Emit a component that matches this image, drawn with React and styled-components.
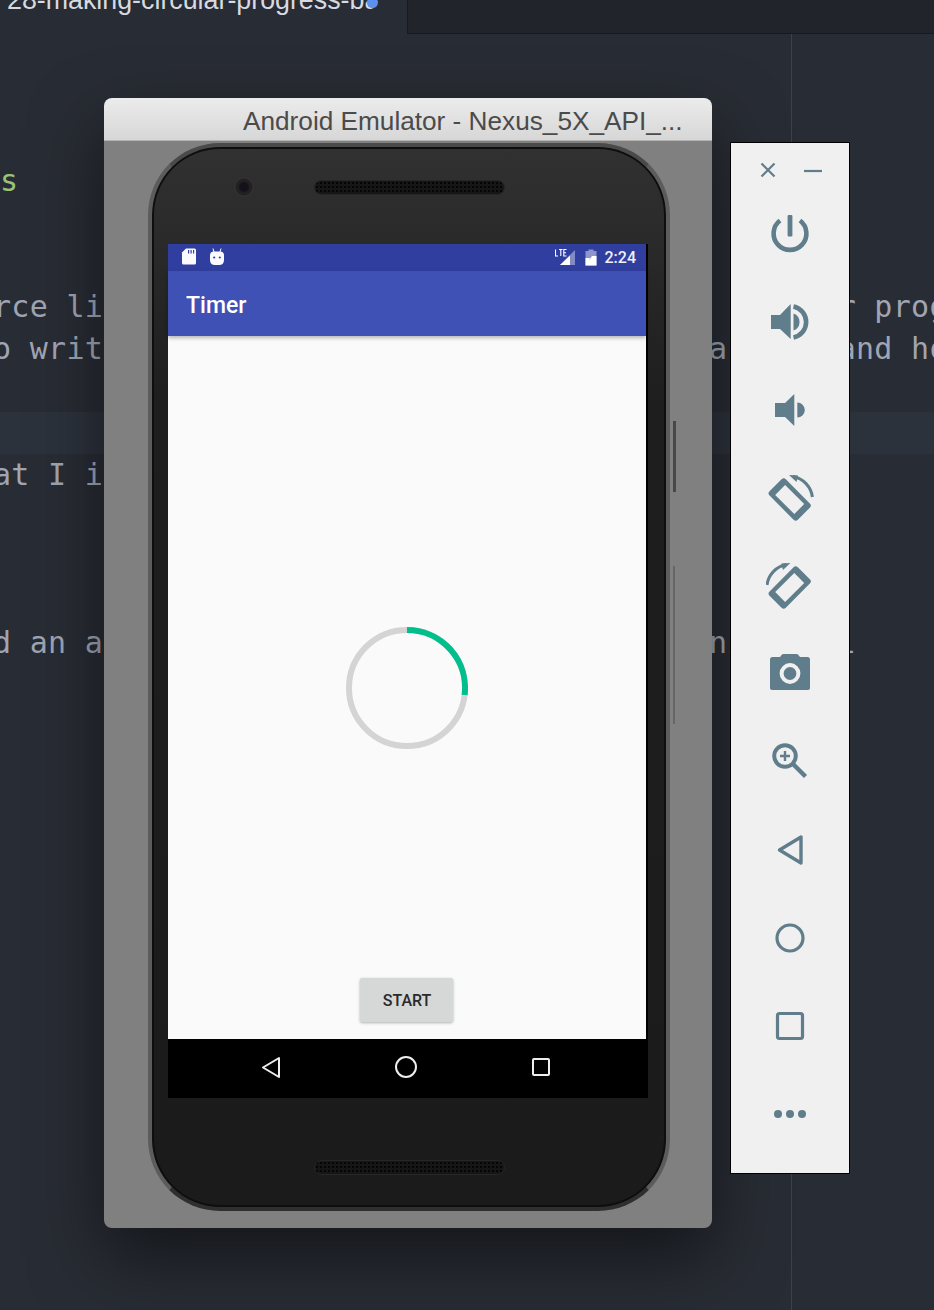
import styled, { createGlobalStyle } from 'styled-components';

const GlobalStyle = createGlobalStyle`
  html, body {
    margin: 0;
    padding: 0;
    background: #282c34;
  }
`;

const Desktop = styled.div`
  position: relative;
  width: 934px;
  height: 1310px;
  overflow: hidden;
  background: #282c34;
`;

const TabBar = styled.div`
  display: flex;
  height: 34px;
`;

const ActiveTab = styled.div`
  position: relative;
  width: 407px;
  overflow: hidden;
  padding-left: 7px;
  box-sizing: border-box;
  font: 26.8px/26px 'Liberation Sans', sans-serif;
  color: #d7dae0;
  white-space: nowrap;
`;

const TabTitle = styled.div`
  margin-top: -13px;
`;

const ModifiedDot = styled.span`
  position: absolute;
  left: 367px;
  top: -3px;
  width: 11px;
  height: 11px;
  border-radius: 50%;
  background: #5b8ff0;
  box-shadow: 8px 0 0 3px #282c34;
`;

const IdleTab = styled.div`
  flex: 1;
  background: #21252b;
  border-left: 1px solid #181a1f;
  border-bottom: 1px solid #181a1f;
`;

const Editor = styled.div`
  font: 30px/42px 'DejaVu Sans Mono', monospace;
  letter-spacing: 0.3px;
  color: #a0a5b3;
  white-space: pre;
`;

const Line = styled.div`
  height: 42px;
  text-indent: ${({ $indent }) => $indent || 0}px;
  color: ${({ $accent }) => ($accent ? '#98c379' : '#a0a5b3')};
  background: ${({ $active }) => ($active ? '#2c323c' : 'transparent')};
`;

const WrapGuide = styled.div`
  position: absolute;
  left: 791px;
  top: 34px;
  bottom: 0;
  width: 1px;
  background: #3b404b;
`;

const EmulatorWindow = styled.div`
  position: absolute;
  left: 104px;
  top: 98px;
  width: 608px;
  height: 1130px;
  display: flex;
  flex-direction: column;
  border-radius: 8px;
  overflow: hidden;
  box-shadow: 0 30px 70px rgba(0, 0, 0, 0.5);
`;

const TitleBar = styled.div`
  height: 43px;
  flex: none;
  box-sizing: border-box;
  padding-left: 139px;
  background: linear-gradient(#ececec, #d7d7d7);
  border-bottom: 1px solid #b4b4b4;
  font: 26.2px/46px 'Liberation Sans', sans-serif;
  color: #4b4b4b;
  white-space: nowrap;
`;

const WindowBody = styled.div`
  flex: 1;
  display: flex;
  padding: 2px 42px 17px 44px;
  background: #808080;
`;

const Phone = styled.div`
  position: relative;
  flex: 1;
  box-sizing: border-box;
  display: flex;
  flex-direction: column;
  padding: 0 16px;
  border: 4px solid #5c5c5c;
  border-top-color: #4a4a4a;
  border-bottom-color: #2f2f2f;
  border-radius: 72px;
  background: linear-gradient(#323131, #1e1e1e 24%, #1b1b1b);
  box-shadow: inset 0 0 0 2px #0e0e0e;
`;

const SideKey = styled.div`
  position: absolute;
  left: 521px;
  top: ${({ $top }) => $top}px;
  width: ${({ $width }) => $width}px;
  height: ${({ $height }) => $height}px;
  background: ${({ $color }) => $color};
`;

const Bezel = styled.div`
  position: relative;
  height: ${({ $height }) => $height}px;
  flex: none;
  box-sizing: border-box;
  padding: ${({ $padTop }) => $padTop || 0}px 0 ${({ $padBottom }) => $padBottom || 0}px;
  display: flex;
  align-items: center;
  justify-content: center;
`;

const Speaker = styled.div`
  width: 191px;
  height: 15px;
  border-radius: 8px;
  background-color: #161616;
  background-image: radial-gradient(circle, #050505 1px, transparent 1.2px);
  background-size: 4px 4px;
  border: 1px solid #262626;
  box-sizing: border-box;
`;

const Lens = styled.div`
  position: absolute;
  left: 66px;
  top: 30px;
  width: 20px;
  height: 20px;
  border-radius: 50%;
  background: radial-gradient(circle, #14111a 0 4px, #232222 6px 8px, #333232 9px);
`;

const Screen = styled.div`
  width: 480px;
  height: 854px;
  flex: none;
  display: flex;
  flex-direction: column;
  background: #000;
`;

const StatusBar = styled.div`
  width: 478px;
  height: 27px;
  flex: none;
  display: flex;
  align-items: center;
  padding: 0 10px 0 13px;
  box-sizing: border-box;
  background: #303f9f;
  color: #f0f1f8;
`;

const StatusGroup = styled.div`
  display: flex;
  align-items: center;
  gap: ${({ $gap }) => $gap}px;
  margin-top: ${({ $lift }) => ($lift ? -2 : 0)}px;
`;

const StatusSpacer = styled.div`
  flex: 1;
`;

const Clock = styled.span`
  font: 500 16px/27px Roboto, sans-serif;
  margin-left: -1px;
`;

const AppBar = styled.div`
  position: relative;
  z-index: 1;
  width: 478px;
  height: 65px;
  flex: none;
  display: flex;
  align-items: center;
  padding: 4px 0 0 18px;
  box-sizing: border-box;
  background: #3f51b5;
  box-shadow: 0 2px 4px rgba(0, 0, 0, 0.28);
  font: 500 23px Roboto, sans-serif;
  color: #fff;
`;

const Content = styled.div`
  width: 478px;
  flex: 1;
  display: grid;
  grid-template-rows: 1fr auto 1fr;
  justify-items: center;
  background: #fafafa;
`;

const Spinner = styled.svg`
  grid-row: 2;
  display: block;
  margin-right: 1px;
`;

const StartButton = styled.button`
  grid-row: 3;
  align-self: end;
  width: 93px;
  height: 44px;
  margin: 0 2px 17px 0;
  padding: 0 0 0 2px;
  border: 0;
  border-radius: 2px;
  background: #d6d7d7;
  box-shadow: 0 1px 3px rgba(0, 0, 0, 0.3);
  font: 500 16px Roboto, sans-serif;
  color: #2a2a2a;
`;

const NavBar = styled.div`
  height: 59px;
  flex: none;
  box-sizing: border-box;
  padding: 0 4px 3px 0;
  display: flex;
  align-items: center;
  justify-content: center;
  gap: 113px;
  background: #000;
`;

const ToolPanel = styled.div`
  position: absolute;
  left: 730px;
  top: 142px;
  width: 120px;
  height: 1032px;
  box-sizing: border-box;
  border: 1px solid #000;
  background: #f0f0f0;
  display: flex;
  flex-direction: column;
  align-items: center;
`;

const WindowControls = styled.div`
  width: 100%;
  height: 47px;
  flex: none;
  box-sizing: border-box;
  padding: 19px 27px 0 29px;
  display: flex;
  justify-content: space-between;
`;

const ToolList = styled.div`
  display: flex;
  flex-direction: column;
  gap: 40px;
  margin-top: 20px;
`;

const ToolIcon = styled.svg`
  display: block;
  width: 48px;
  height: 48px;
  fill: #607d8b;
  stroke: none;
`;

const lines = [
  {}, {}, {},
  { text: 's', accent: true },
  {}, {},
  { text: 'rce like this'.padEnd(40) + 'c'.padEnd(6) + 'r progress' },
  { text: 'o write this'.padEnd(39) + 'a'.padEnd(7) + 'and how' },
  {},
  { active: true },
  { text: 'at I in' },
  {}, {}, {},
  { text: 'd an arc'.padEnd(39) + 'ni'.padEnd(7) + 'l' },
];

const RotateIcon = ({ flip }) => (
  <ToolIcon viewBox="0 0 48 48">
    <g transform={flip ? 'translate(47.4 0) scale(-1 1)' : undefined}>
      <g transform="rotate(45 23.7 25.5)">
        <rect x="3.7" y="14" width="40" height="23" rx="3" />
        <rect x="10.2" y="18.5" width="27" height="14" fill="#f0f0f0" />
      </g>
      <path d="M27 2.5 A24 24 0 0 1 46.4 23" fill="none" stroke="#607d8b" strokeWidth="3" />
      <path d="M23 1 L32 1.5 L30.5 8 Z" />
    </g>
  </ToolIcon>
);

const tools = [
  <ToolIcon key="power" viewBox="0 0 48 48">
    <path d="M14 10.5 A16.4 16.4 0 1 0 34 10.5" fill="none" stroke="#607d8b" strokeWidth="4.6" />
    <rect x="21.6" y="5" width="4.8" height="21.5" rx="1" />
  </ToolIcon>,
  <ToolIcon key="volume-up" viewBox="0 0 48 48">
    <path d="M5 17 H14 L24.7 6 V41 L14 31 H5 Z" />
    <path d="M27.5 15.5 A9 9 0 0 1 27.5 32.5 Z" />
    <path d="M27.5 8.6 A15.7 15.7 0 0 1 27.5 39.4" fill="none" stroke="#607d8b" strokeWidth="4.6" />
  </ToolIcon>,
  <ToolIcon key="volume-down" viewBox="0 0 48 48">
    <path d="M9 17 H19 L28.3 8 V40 L19 31 H9 Z" />
    <path d="M31.3 16.5 A7.5 7.5 0 0 1 31.3 31.5 Z" />
  </ToolIcon>,
  <RotateIcon key="rotate-left" />,
  <RotateIcon key="rotate-right" flip />,
  <ToolIcon key="camera" viewBox="0 0 48 48">
    <path d="M6.5 7 H14 L16 4.5 Q16.5 4 17.5 4 H30.5 Q31.5 4 32 4.5 L34 7 H41.5 Q44 7 44 9.5 V38 Q44 40 41 40 H7 Q4 40 4 38 V9.5 Q4 7 6.5 7 Z" />
    <circle cx="24" cy="23.5" r="8.4" fill="none" stroke="#f0f0f0" strokeWidth="4" />
  </ToolIcon>,
  <ToolIcon key="zoom" viewBox="0 0 48 48">
    <circle cx="19" cy="18" r="10.8" fill="none" stroke="#607d8b" strokeWidth="4" />
    <path d="M14 18 H24 M19 13 V23" fill="none" stroke="#607d8b" strokeWidth="2.4" />
    <path d="M27.5 26.5 L39.5 38.5" fill="none" stroke="#607d8b" strokeWidth="4.4" />
  </ToolIcon>,
  <ToolIcon key="back" viewBox="0 0 48 48">
    <path d="M13.5 24 L35 11 V37 Z" fill="none" stroke="#607d8b" strokeWidth="3.4" strokeLinejoin="round" />
  </ToolIcon>,
  <ToolIcon key="home" viewBox="0 0 48 48">
    <circle cx="24" cy="24" r="13" fill="none" stroke="#607d8b" strokeWidth="3.2" />
  </ToolIcon>,
  <ToolIcon key="overview" viewBox="0 0 48 48">
    <rect x="11.5" y="11.5" width="25" height="25" rx="2" fill="none" stroke="#607d8b" strokeWidth="3.2" />
  </ToolIcon>,
  <ToolIcon key="more" viewBox="0 0 48 48">
    <circle cx="12" cy="24" r="4" />
    <circle cx="24" cy="24" r="4" />
    <circle cx="36" cy="24" r="4" />
  </ToolIcon>,
];

export default function App() {
  return (
    <Desktop>
      <GlobalStyle />
      <TabBar>
        <ActiveTab>
          <TabTitle>28-making-circular-progress-bar</TabTitle>
          <ModifiedDot />
        </ActiveTab>
        <IdleTab />
      </TabBar>
      <Editor>
        {lines.map((line, i) => (
          <Line key={i} $accent={line.accent} $active={line.active} $indent={line.text && !line.accent ? -7 : 0}>
            {line.text || ' '}
          </Line>
        ))}
      </Editor>
      <WrapGuide />

      <EmulatorWindow>
        <TitleBar>Android Emulator - Nexus_5X_API_...</TitleBar>
        <WindowBody>
          <Phone>
            <SideKey $top={274} $height={71} $width={3} $color="#484848" />
            <SideKey $top={419} $height={158} $width={2} $color="#666" />
            <Bezel $height={97} $padBottom={17}>
              <Lens />
              <Speaker />
            </Bezel>
            <Screen>
              <StatusBar>
                <StatusGroup $gap={12} $lift>
                  <svg width="16" height="17" viewBox="0 0 16 17" fill="#fbfbff">
                    <path d="M5 0.5 H13.5 Q15 0.5 15 2 V15 Q15 16.5 13.5 16.5 H2.5 Q1 16.5 1 15 V4.5 Z" />
                    <path d="M7 2 H8.2 V5.5 H7 Z M9.5 2 H10.7 V5.5 H9.5 Z M12 2 H13.2 V5.5 H12 Z" fill="#303f9f" />
                  </svg>
                  <svg width="16" height="18" viewBox="0 0 16 18" fill="#fbfbff">
                    <path d="M1 7.5 Q1 3.5 5 3.5 H11 Q15 3.5 15 7.5 V12 Q15 17 10 17 H6 Q1 17 1 12 Z" />
                    <path d="M4 0.5 L5 4 M12 0.5 L11 4" stroke="#fbfbff" strokeWidth="1" />
                    <circle cx="5.2" cy="9.5" r="1.1" fill="#303f9f" />
                    <circle cx="10.8" cy="9.5" r="1.1" fill="#303f9f" />
                  </svg>
                </StatusGroup>
                <StatusSpacer />
                <StatusGroup $gap={9}>
                  <svg width="21" height="17" viewBox="0 0 21 17">
                    <path d="M20 1 V16 H5 Z" fill="#fff" fillOpacity="0.4" />
                    <path d="M15 6.5 V16 H5 Z" fill="#fff" />
                    <path d="M0.5 0.5 V7 H3 M4 0.5 H7.5 M5.8 0.5 V7 M11.5 0.5 H8.8 V7 H11.5 M8.8 3.7 H11" fill="none" stroke="#fff" strokeWidth="1.1" />
                  </svg>
                  <svg width="12" height="17" viewBox="0 0 12 17">
                    <path d="M3.5 2 V0.5 H8.5 V2 H11.5 V16.5 H0.5 V2 Z" fill="#fff" fillOpacity="0.45" />
                    <path d="M0.5 9 H5 L4 11.5 L7 7 H11.5 V16.5 H0.5 Z" fill="#fff" />
                  </svg>
                  <Clock>2:24</Clock>
                </StatusGroup>
              </StatusBar>
              <AppBar>Timer</AppBar>
              <Content>
                <Spinner width="122" height="122" viewBox="0 0 122 122">
                  <circle cx="61" cy="61" r="58" fill="none" stroke="#d4d4d4" strokeWidth="6" />
                  <path d="M61 3 A58 58 0 0 1 118.6 68" fill="none" stroke="#00bf8c" strokeWidth="6" />
                </Spinner>
                <StartButton>START</StartButton>
              </Content>
              <NavBar>
                <svg width="20" height="23" viewBox="0 0 20 23" fill="none" stroke="#eee" strokeWidth="2" strokeLinejoin="round">
                  <path d="M2 11.5 L18 2 V21 Z" />
                </svg>
                <svg width="24" height="24" viewBox="0 0 24 24" fill="none" stroke="#eee" strokeWidth="2">
                  <circle cx="12" cy="12" r="10" />
                </svg>
                <svg width="20" height="20" viewBox="0 0 20 20" fill="none" stroke="#eee" strokeWidth="2">
                  <rect x="2" y="2" width="16" height="16" rx="1" />
                </svg>
              </NavBar>
            </Screen>
            <Bezel $height={109} $padTop={30}>
              <Speaker />
            </Bezel>
          </Phone>
        </WindowBody>
      </EmulatorWindow>

      <ToolPanel>
        <WindowControls>
          <svg width="16" height="16" viewBox="0 0 16 16" fill="none" stroke="#607d8b" strokeWidth="2.2">
            <path d="M1.5 1.5 L14.5 14.5 M14.5 1.5 L1.5 14.5" />
          </svg>
          <svg width="18" height="16" viewBox="0 0 18 16" fill="none" stroke="#607d8b" strokeWidth="2.2">
            <path d="M0 9 H18" />
          </svg>
        </WindowControls>
        <ToolList>{tools}</ToolList>
      </ToolPanel>
    </Desktop>
  );
}
